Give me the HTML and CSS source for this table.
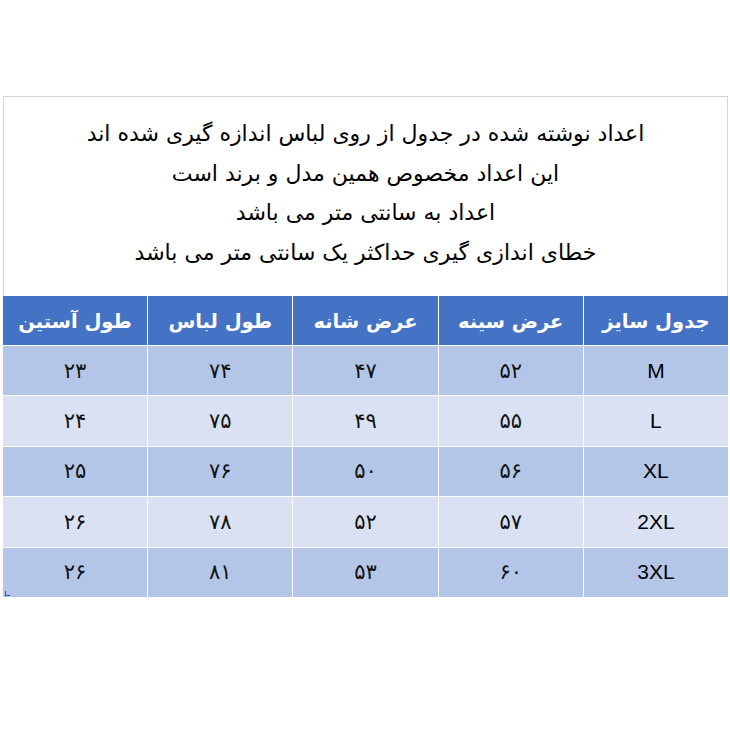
FILE: index.html
```html
<!DOCTYPE html>
<html lang="fa">
<head>
<meta charset="utf-8">
<link rel="stylesheet" href="styles.css">
</head>
<body>
<div class="sheet">
  <div class="note" dir="rtl">
    <p>اعداد نوشته شده در جدول از روی لباس اندازه گیری شده اند</p>
    <p>این اعداد مخصوص همین مدل و برند است</p>
    <p>اعداد به سانتی متر می باشد</p>
    <p>خطای اندازی گیری حداکثر یک سانتی متر می باشد</p>
  </div>
  <div class="grid" dir="rtl">
    <div class="cell head">جدول سایز</div>
    <div class="cell head">عرض سینه</div>
    <div class="cell head">عرض شانه</div>
    <div class="cell head">طول لباس</div>
    <div class="cell head">طول آستین</div>

    <div class="cell odd size">M</div>
    <div class="cell odd num">۵۲</div>
    <div class="cell odd num">۴۷</div>
    <div class="cell odd num">۷۴</div>
    <div class="cell odd num">۲۳</div>

    <div class="cell even size">L</div>
    <div class="cell even num">۵۵</div>
    <div class="cell even num">۴۹</div>
    <div class="cell even num">۷۵</div>
    <div class="cell even num">۲۴</div>

    <div class="cell odd size">XL</div>
    <div class="cell odd num">۵۶</div>
    <div class="cell odd num">۵۰</div>
    <div class="cell odd num">۷۶</div>
    <div class="cell odd num">۲۵</div>

    <div class="cell even size">2XL</div>
    <div class="cell even num">۵۷</div>
    <div class="cell even num">۵۲</div>
    <div class="cell even num">۷۸</div>
    <div class="cell even num">۲۶</div>

    <div class="cell odd size">3XL</div>
    <div class="cell odd num">۶۰</div>
    <div class="cell odd num">۵۳</div>
    <div class="cell odd num">۸۱</div>
    <div class="cell odd num">۲۶</div>
  </div>
  <span class="handle"></span>
</div>
</body>
</html>
```

FILE: styles.css
```css
html, body {
  margin: 0;
  padding: 0;
  background: #ffffff;
}

body {
  font-family: "DejaVu Sans", sans-serif;
  color: #000;
}

.sheet {
  position: relative;
  margin: 96px 0 0 3px;
  width: 725px;
}

.note {
  box-sizing: border-box;
  height: 200px;
  border: 1px solid #d4d4d4;
  border-bottom: none;
  padding-top: 17px;
  text-align: center;
  font-size: 22px;
}

.note p {
  margin: 0;
  line-height: 39.5px;
}

.grid {
  display: grid;
  grid-template-columns: repeat(5, 1fr);
  grid-template-rows: 49px repeat(5, 49.4px);
  gap: 1px;
  background: #ffffff;
}

.cell {
  display: flex;
  align-items: center;
  justify-content: center;
}

.head {
  background: #4472c4;
  color: #ffffff;
  font-weight: bold;
  font-size: 19.5px;
  padding-top: 1px;
}

.odd {
  background: #b4c6e7;
}

.even {
  background: #d9e1f2;
}

.num {
  font-size: 21px;
  color: #111;
}

.size {
  font-family: "Liberation Sans", Arial, sans-serif;
  font-size: 21px;
}

.handle {
  position: absolute;
  left: 2px;
  bottom: 1px;
  width: 4px;
  height: 4px;
  border-left: 1px solid #2f5597;
  border-bottom: 1px solid #2f5597;
}
```
